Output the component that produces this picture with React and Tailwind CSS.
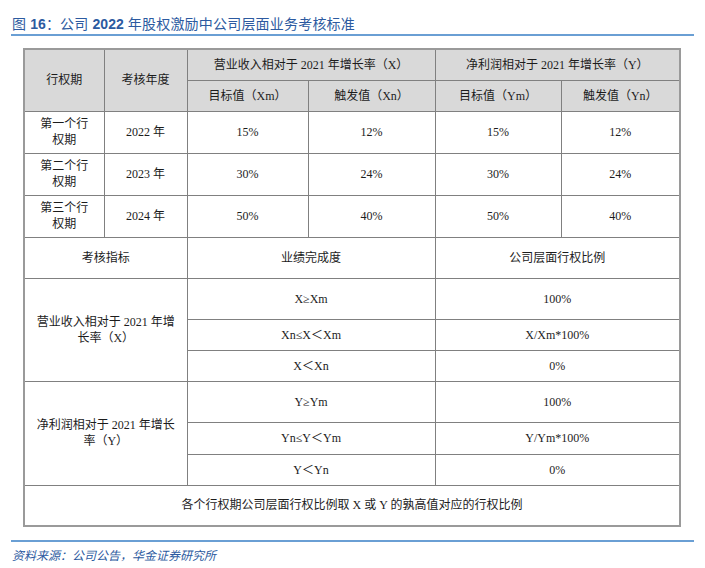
import React from 'react';

const cell = 'border border-[#808080] text-center align-middle p-0';
const head = cell + ' bg-[#d9d9d9]';

const years = [
  { label: ['第一个行', '权期'], year: '2022 年', v: ['15%', '12%', '15%', '12%'] },
  { label: ['第二个行', '权期'], year: '2023 年', v: ['30%', '24%', '30%', '24%'] },
  { label: ['第三个行', '权期'], year: '2024 年', v: ['50%', '40%', '50%', '40%'] },
];

const groups = [
  {
    label: ['营业收入相对于 2021 年增', '长率（X）'],
    rows: [
      { h: 'h-[41px]', cond: 'X≥Xm', ratio: '100%' },
      { h: 'h-[31px]', cond: 'Xn≤X＜Xm', ratio: 'X/Xm*100%' },
      { h: 'h-[31px]', cond: 'X＜Xn', ratio: '0%' },
    ],
  },
  {
    label: ['净利润相对于 2021 年增长', '率（Y）'],
    rows: [
      { h: 'h-[41px]', cond: 'Y≥Ym', ratio: '100%' },
      { h: 'h-[32px]', cond: 'Yn≤Y＜Ym', ratio: 'Y/Ym*100%' },
      { h: 'h-[31px]', cond: 'Y＜Yn', ratio: '0%' },
    ],
  },
];

const App = () => {
  return (
    <div className="w-[705px] h-[568px] bg-white px-[11px] overflow-hidden">
      <div className="pt-[14px] leading-[20px] text-[14px] tracking-[0.2px] text-[#2c5aa0] font-['Liberation_Sans','Noto_Sans_CJK_SC',sans-serif] pl-[1px]">
        图 <span className="font-semibold tracking-normal">16</span>：公司 <span className="font-semibold tracking-normal">2022</span> 年股权激励中公司层面业务考核标准
      </div>
      <div className="h-[2px] bg-[#6a9fd4]" />

      <table className="mt-[12px] ml-[12px] w-[656px] table-fixed border-collapse border-2 border-[#9a9a9a] text-[12px] leading-[16px] text-[#1c1c1c] font-['Liberation_Serif','Noto_Sans_CJK_SC',serif]">
        <colgroup>
          <col className="w-[80px]" />
          <col className="w-[83px]" />
          <col className="w-[121px]" />
          <col className="w-[127px]" />
          <col className="w-[126px]" />
          <col className="w-[119px]" />
        </colgroup>
        <tbody>
          <tr className="h-[31px]">
            <td rowSpan={2} className={head}>行权期</td>
            <td rowSpan={2} className={head}>考核年度</td>
            <td colSpan={2} className={head}>营业收入相对于 2021 年增长率（X）</td>
            <td colSpan={2} className={head}>净利润相对于 2021 年增长率（Y）</td>
          </tr>
          <tr className="h-[31px]">
            <td className={head}>目标值（Xm）</td>
            <td className={head}>触发值（Xn）</td>
            <td className={head}>目标值（Ym）</td>
            <td className={head}>触发值（Yn）</td>
          </tr>
          {years.map((r) => (
            <tr key={r.year} className="h-[42px]">
              <td className={cell}>
                {r.label[0]}
                <br />
                {r.label[1]}
              </td>
              <td className={cell}>{r.year}</td>
              {r.v.map((v, i) => (
                <td key={i} className={cell}>{v}</td>
              ))}
            </tr>
          ))}
          <tr className="h-[41px]">
            <td colSpan={2} className={cell}>考核指标</td>
            <td colSpan={2} className={cell}>业绩完成度</td>
            <td colSpan={2} className={cell}>公司层面行权比例</td>
          </tr>
          {groups.map((g) =>
            g.rows.map((r, i) => (
              <tr key={r.cond} className={r.h}>
                {i === 0 && (
                  <td rowSpan={3} colSpan={2} className={cell}>
                    {g.label[0]}
                    <br />
                    {g.label[1]}
                  </td>
                )}
                <td colSpan={2} className={cell}>{r.cond}</td>
                <td colSpan={2} className={cell}>{r.ratio}</td>
              </tr>
            ))
          )}
          <tr className="h-[41px]">
            <td colSpan={6} className={cell}>各个行权期公司层面行权比例取 X 或 Y 的孰高值对应的行权比例</td>
          </tr>
        </tbody>
      </table>

      <div className="mt-[13px] h-[2px] bg-[#6a9fd4]" />
      <div className="mt-[5px] pl-[1px] leading-[16px] text-[12px] italic text-[#2c5aa0] font-['Noto_Sans_CJK_SC',sans-serif]">
        资料来源：公司公告，华金证券研究所
      </div>
    </div>
  );
};

export default App;
